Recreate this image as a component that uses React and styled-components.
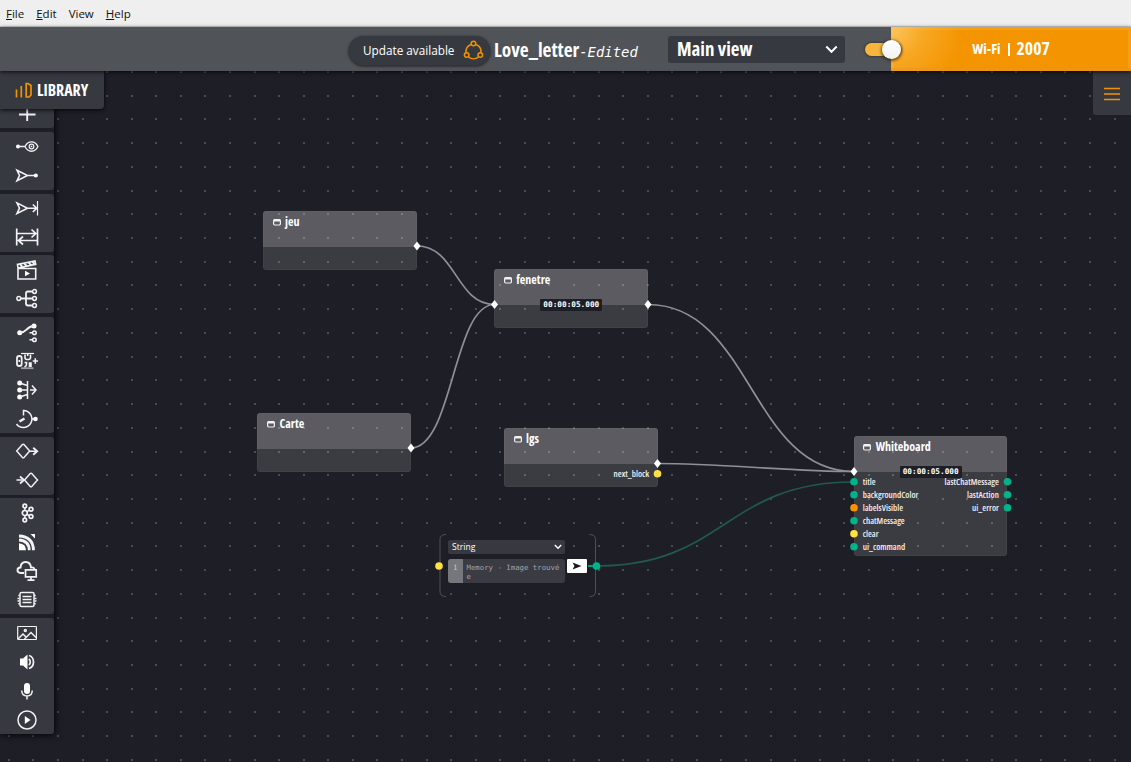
import React from "react";
import styled, { createGlobalStyle } from "styled-components";

const Global = createGlobalStyle`
  * { box-sizing: border-box; }
  html, body { margin: 0; padding: 0; height: 100%; overflow: hidden; }
  body { background: #1e1e27; font-family: "Open Sans", "Noto Sans", sans-serif; color: #fff; }
  #root { height: 100%; }
`;

const Page = styled.div`
  display: flex;
  flex-direction: column;
  width: 1131px;
  height: 762px;
  overflow: hidden;
`;

/* Text in the condensed or monospaced face */
const Label = styled.span`
  display: inline-block;
  white-space: nowrap;
  font-family: ${(p) => (p.$mono ? '"DejaVu Sans Mono", monospace' : '"Open Sans", sans-serif')};
  font-size: ${(p) => p.$size}px;
  font-weight: ${(p) => p.$weight || 400};
  font-style: ${(p) => (p.$italic ? "italic" : "normal")};
  font-stretch: ${(p) => p.$stretch || 100}%;
  line-height: 1;
  color: ${(p) => p.$color || "#fff"};
`;

const MenuBar = styled.nav`
  flex: none;
  display: flex;
  gap: 12px;
  height: 27px;
  padding: 1px 6px 0;
  align-items: center;
  background: #efefef;
  border-bottom: 1px solid #d4d6d6;
`;
const MenuItem = styled.span`
  font: 11.5px/16px "Open Sans", sans-serif;
  color: #111;
  &::first-letter { text-decoration: ${(p) => (p.$plain ? "none" : "underline")}; }
`;

const Header = styled.header`
  position: relative;
  z-index: 5;
  flex: none;
  display: flex;
  align-items: center;
  height: 44px;
  padding-left: 349px;
  background: #505357;
  box-shadow: 0 1px 4px rgba(0, 0, 0, 0.8);
`;
const UpdateButton = styled.div`
  display: flex;
  align-items: center;
  justify-content: space-between;
  width: 141px;
  height: 29px;
  margin-top: 3px;
  padding: 0 6px 0 14px;
  border-radius: 15px;
  background: #373940;
  box-shadow: 0 1px 2px 1px rgba(20, 20, 24, 0.5);
`;
const Title = styled.div`
  display: flex;
  align-items: baseline;
  width: 174px;
  padding: 1px 0 0 4px;
`;
const ViewSelect = styled.div`
  display: flex;
  align-items: center;
  justify-content: space-between;
  width: 177px;
  height: 27px;
  padding: 1px 7px 0 9px;
  margin-right: 20px;
  margin-left: 4px;
  border-radius: 3px;
  background: #373940;
`;
const Toggle = styled.div`
  position: relative;
  z-index: 2;
  display: flex;
  align-items: center;
  justify-content: flex-end;
  width: 36px;
  height: 13px;
  margin-right: -10px;
  border-radius: 7px;
  background: #f7b53d;
  box-shadow: 0 0 2px 1px rgba(50, 45, 40, 0.6);
`;
const Knob = styled.div`
  flex: none;
  width: 19px;
  height: 19px;
  border-radius: 50%;
  background: linear-gradient(#fff, #f1f1f1);
  box-shadow: 0 1px 3px 1px rgba(60, 40, 10, 0.75);
`;
const Wifi = styled.div`
  flex: 1;
  display: flex;
  align-items: center;
  justify-content: center;
  gap: 7px;
  height: 44px;
  background: radial-gradient(circle at 0 0, #fdc65e 0, #f7a824 32px, #f49400 72px);
  box-shadow: inset 0 0 0 3px rgba(255, 190, 80, 0.25), inset 0 -3px 1px rgba(195, 105, 0, 0.3);
`;
const Divider = styled.i`
  width: 2px;
  height: 13px;
  background: #fff;
`;

const Canvas = styled.main`
  position: relative;
  flex: 1;
  display: flex;
  justify-content: space-between;
  align-items: flex-start;
  overflow: hidden;
  background: #1e1e27;
`;
const World = styled.div`
  position: absolute;
  left: 0;
  top: -71px;
  width: 1131px;
  height: 762px;
`;
const Layer = styled.svg`
  position: absolute;
  left: 0;
  top: 0;
  pointer-events: none;
`;

const Side = styled.aside`
  position: relative;
  z-index: 2;
  width: 104px;
`;
const LibraryTab = styled.div`
  position: relative;
  z-index: 2;
  display: flex;
  align-items: center;
  gap: 5px;
  height: 38px;
  padding: 1px 0 0 15px;
  border-radius: 0 0 4px 0;
  background: #373940;
  box-shadow: 0 1px 4px rgba(0, 0, 0, 0.85);
`;
const Tools = styled.div`
  display: flex;
  flex-direction: column;
  gap: 3.7px;
  width: 54px;
  margin-top: -9.7px;
  background: #1e1e27;
  box-shadow: 1px 1px 7px rgba(0, 0, 0, 0.9);
  border-radius: 0 0 3px 0;
`;
const ToolGroup = styled.div`
  border-radius: 0 3px 3px 0;
  background: #373940;
`;
const Tool = styled.div`
  display: flex;
  align-items: center;
  justify-content: center;
  height: 29px;
`;
const Icon = styled.svg`
  display: block;
  flex: none;
  fill: none;
  stroke: ${(p) => p.$stroke || "#f2f2f4"};
  stroke-width: 1.5;
  .f { fill: #fff; stroke: none; }
`;
const MenuTab = styled.div`
  position: relative;
  z-index: 2;
  display: flex;
  align-items: center;
  justify-content: center;
  width: 38px;
  height: 44px;
  padding-top: 1px;
  border-radius: 0 0 0 3px;
  background: #373940;
`;

const Node = styled.section`
  position: absolute;
  left: ${(p) => p.$x}px;
  top: ${(p) => p.$y}px;
  width: 153.7px;
  height: ${(p) => p.$h || 59}px;
  border-radius: 3px;
  background: rgba(255, 255, 255, 0.13);
  box-shadow: inset 0 0 0 1px rgba(255, 255, 255, 0.03);
`;
const NodeHead = styled.div`
  display: flex;
  align-items: center;
  gap: 4.5px;
  height: 35.5px;
  padding: 0 0 13.5px 9.5px;
  border-radius: 3px 3px 0 0;
  background: rgba(255, 255, 255, 0.165);
`;
const Timer = styled.div`
  position: absolute;
  left: 46px;
  top: 29.5px;
  width: 62px;
  height: 12px;
  border-radius: 1px;
  background: #1e1e27;
  display: flex;
  align-items: center;
  justify-content: center;
`;
const Ports = styled.div`
  display: flex;
  justify-content: space-between;
  padding: 4px 8.5px 0 9px;
`;
const PortCol = styled.div`
  display: flex;
  flex-direction: column;
  align-items: ${(p) => (p.$right ? "flex-end" : "flex-start")};
`;
const Port = styled.div`
  display: flex;
  align-items: center;
  height: 13px;
`;
const ConstantBox = styled.div`
  position: absolute;
  left: 448px;
  top: 540px;
  width: 140px;
`;
const TypeSelect = styled.div`
  display: flex;
  align-items: center;
  justify-content: space-between;
  width: 117px;
  height: 14px;
  padding: 0 3px 0 4px;
  border-radius: 2px;
  background: #373940;
`;
const EditorRow = styled.div`
  display: flex;
  align-items: flex-start;
  gap: 2.4px;
  margin-top: 5px;
`;
const Editor = styled.div`
  display: flex;
  width: 117px;
  height: 24px;
  border-radius: 3px;
  overflow: hidden;
  background: #3b3b44;
  font: 7.35px/9px "DejaVu Sans Mono", monospace;
  color: #a2a3a8;
`;
const Gutter = styled.div`
  width: 14.5px;
  padding-top: 3.5px;
  background: #75777c;
  color: #c6c6ca;
  text-align: center;
`;
const Code = styled.div`
  flex: 1;
  padding: 3.5px 0 0 4px;
  white-space: pre;
`;
const Send = styled.div`
  width: 20px;
  height: 14px;
  border-radius: 1px;
  background: #fff;
  display: flex;
  align-items: center;
  justify-content: center;
`;

const ICONS = {
  plus: <path d="M4 12.500h16.500M12.200 4v15" strokeWidth="1.9" />,
  view: <><circle className="f" cx="3" cy="11.500" r="2" /><path d="M3 11.500h7M10 11.500C13 5.200 20 5.200 22.900 11.500C20 17.800 13 17.800 10 11.500Z" strokeWidth="1.3" /><circle cx="16.500" cy="11.500" r="2.300" strokeWidth="1.2" /><circle className="f" cx="16.500" cy="11.500" r="0.800" /></>,
  inlet: <><path d="M2 6.200L12.500 11.500L2 16.800L4.500 11.500Z M12 11.500h8" strokeWidth="1.6" /><circle className="f" cx="20.800" cy="11.500" r="2.100" /></>,
  outlet: <><path d="M2 6.900L12.500 12.200L2 17.500L4.500 12.200Z M12 12.200h10M17.800 8.500L21.800 12.200L17.800 16" strokeWidth="1.6" /><path d="M22.500 5v14.500" strokeWidth="1.2" /></>,
  swap: <path d="M1.700 3.500v17M22.500 3.500v17M2 8.500h19M16.500 4.500L20.800 8.500L16.500 12.500M22 15.500H4M8 11.500L3.500 15.500L8 19.500" strokeWidth="1.700" />,
  film: <><path d="M3 10.500h17.700v10.500H3zM3 10L2.500 6.500L20 3L20.700 6.300Z" strokeWidth="1.6" /><path d="M5 6.200L7.500 9M9 5.400L12 8.300M13.500 4.500L16.500 7.400M17.500 3.800L19.500 6" strokeWidth="1.9" /><path className="f" d="M10 12.800v5.400l5-2.700z" /></>,
  tree: <><circle cx="3.800" cy="11.500" r="1.900" /><circle cx="19.500" cy="4.500" r="1.900" /><circle cx="19.500" cy="11.500" r="1.900" /><circle cx="19.500" cy="18.500" r="1.900" /><path d="M6 11.500h11.500M17.500 4.500h-4.500q-2 0-2 2v10q0 2 2 2h4.500" strokeWidth="1.800" /></>,
  route: <><circle className="f" cx="4.700" cy="12.800" r="2.500" /><circle className="f" cx="19" cy="6" r="2.500" /><path d="M4.700 12.800C12.500 12.500 10.500 6.500 19 6" strokeWidth="1.9" /><circle cx="19.400" cy="12.800" r="1.800" /><circle cx="19.400" cy="19.700" r="1.800" /><path d="M14.500 12.800h3M14.500 19.700h3" /></>,
  counter: <><path d="M6 4.500h13" strokeWidth="1.2" /><path d="M6 19.200h12.500" stroke="#999b9f" strokeWidth="1.8" /><rect x="2" y="7" width="4.700" height="10" rx="2.300" strokeWidth="1.800" /><path d="M4.300 11v2M10 5.500v3q0 2 2 2h1.500q2 0 2-2v-3M12.700 4v3M9.500 13.500h2v2q0 1.500-2 2.500M14.500 18v-4h1.500v4" strokeWidth="1.6" /><path d="M17.700 12h5.300M20.300 9.300v5.400" strokeWidth="1.6" /></>,
  merge: <><circle className="f" cx="4.700" cy="5" r="2.500" /><circle className="f" cx="4.700" cy="12" r="2.500" /><circle className="f" cx="4.700" cy="19" r="2.500" /><path d="M4.500 5l8 2.500M4.500 12h8M4.500 19l8-2.500M12.500 3v18M15 12h6M17 7.500L21 12L17 16.500" /></>,
  timer: <><path d="M8.500 8.500V3.500A8.500 8.500 0 1 1 1.500 17" /><path d="M4.500 14.500L9.500 11.500" strokeWidth="2.400" /><path d="M17 12h4" /><circle className="f" cx="20.500" cy="12" r="2.300" /></>,
  diaOut: <><path d="M1.700 12L7.200 5.700Q8.200 5 9.200 5.700L14.700 12L9.200 18.300Q8.200 19 7.200 18.300Z M15 12.200h6" /><path d="M18.200 8.700l4 3.500l-4 3.500" strokeWidth="1.800" /></>,
  diaIn: <><path d="M9.500 12L15 5.700Q16 5 17 5.700L22.500 12L17 18.300Q16 19 15 18.300Z M1.500 12h6" /><path d="M5 8.500l4 3.500l-4 3.500" strokeWidth="1.800" /></>,
  kafka: <><circle cx="9.800" cy="12" r="2.500" strokeWidth="1.7" /><circle cx="9.800" cy="5" r="1.800" strokeWidth="1.7" /><circle cx="9.800" cy="19" r="1.800" strokeWidth="1.7" /><circle cx="16" cy="8.300" r="1.900" strokeWidth="1.7" /><circle cx="16" cy="15.500" r="1.900" strokeWidth="1.7" /><path d="M9.900 7v2.500M9.900 14.500V17M12 10.700L14.500 9.200M12 13.300L14.500 14.600" /></>,
  feed: <><path d="M4 10Q14 10.500 14.300 20.200M4 6Q18 6.500 18.500 20.200" strokeWidth="2.800" /><path className="f" d="M4 13.200Q11 13.700 11 20.200H4zM15.500 4H20v4.500z" /></>,
  cloud: <><path d="M9 14H5.500C1.500 14 1.500 8.500 5.500 8.500C6 1.500 15 1 16 8.500Q19 8 19.500 10.500" strokeWidth="1.900" /><path d="M10.500 10.800h10.700v7h-10.700zM16 18v3M12.500 21.200h7" strokeWidth="1.700" /></>,
  chip: <><rect x="5" y="4.500" width="14" height="14" rx="1.500" strokeWidth="1.5" /><path d="M7.500 8.500h9M7.500 11.500h9M7.500 14.500h9" strokeWidth="1.500" /><path d="M3.300 7.500h1.500M2.500 10.500h2M2.500 13h2M3.300 15.800h1.500M19 7.500h1.700M19.500 10.500h2M19.500 13h2M19 15.800h1.700" /></>,
  image: <><rect x="2.700" y="5.500" width="18.700" height="13" rx="0.500" strokeWidth="1.2" /><circle cx="10.300" cy="9.500" r="1" /><path d="M3 18L8 13L11 16M9.500 18L16 11.500L21 16.500" /></>,
  sound: <><path className="f" d="M5 8.500h3l4.500-4v15l-4.500-4H5z" /><path d="M14 5.500Q18.500 7 18.500 12Q18.500 17 14 18.500M13.800 9Q15.300 10 15.300 12Q15.300 14 13.800 15" strokeWidth="1.700" /></>,
  mic: <><rect className="f" x="9" y="4" width="6" height="11" rx="3" /><path d="M6.700 11.500Q7 17 12 17Q17 17 17.300 11.500M12 17v3.500" strokeWidth="1.5" /></>,
  play: <><circle cx="12" cy="12" r="9" /><path className="f" d="M9.800 8v8l5.700-4z" /></>,
};
const GROUPS = [["plus"], ["view", "inlet"], ["outlet", "swap"], ["film", "tree"], ["route", "counter", "merge", "timer"], ["diaOut", "diaIn"], ["kafka", "feed", "cloud", "chip"], ["image", "sound", "mic", "play"]];

const XS = Array.from({ length: 47 }, (_, i) => 8.9 + i * 24.57);
const YS = Array.from({ length: 30 }, (_, i) => 72 + i * 23.72);

const WindowIcon = () => (
  <Icon width="8" height="7" viewBox="0 0 8 7">
    <rect x="0.600" y="0.700" width="6.800" height="5.300" rx="1.200" strokeWidth="1.200" />
    <path d="M0.700 1.500h6.600" strokeWidth="2" />
  </Icon>
);

const Chevron = ({ w, sw }) => (
  <Icon width={w} height={w * 0.7} viewBox="0 0 10 7" $stroke="#fff">
    <path d="M1 1.200L5 5.200L9 1.200" strokeWidth={sw} />
  </Icon>
);

const PortList = ({ names, right }) => (
  <PortCol $right={right}>
    {names.map((t) => (
      <Port key={t}><Label $size={8.85} $weight={600} $stretch={75} $color="#f0f0f2">{t}</Label></Port>
    ))}
  </PortCol>
);

const Block = ({ name, x, y, h, time, inputs = [], outputs = [] }) => (
  <Node $x={x} $y={y} $h={h}>
    <NodeHead>
      <WindowIcon />
      <Label $size={12} $weight={700} $stretch={75}>{name}</Label>
    </NodeHead>
    {time && <Timer><Label $mono $size={7.75} $weight={700}>{time}</Label></Timer>}
    <Ports>
      <PortList names={inputs} />
      <PortList names={outputs} right />
    </Ports>
  </Node>
);

const WIRES = [
  "M417 246C456 246 456 304.500 494.500 304.500",
  "M411 448C453 448 453 304.500 494.500 304.500",
  "M648 304.500C751 304.500 751 471.500 854 471.500",
  "M657.500 463.500C720 463.500 792 471.500 854 471.500",
];
const DIAMONDS = [[417, 246], [494.5, 304.5], [648, 304.5], [411, 448], [657.5, 463.5], [854, 471.5]];
const GREEN = "#00b38a";
const YELLOW = "#ffe042";
const DOTS = [
  [854, 481.7, GREEN], [854, 494.7, GREEN], [854, 507.7, "#fb9300"], [854, 520.7, GREEN], [854, 533.7, YELLOW], [854, 546.7, GREEN],
  [1007.5, 481.7, GREEN], [1007.5, 494.7, GREEN], [1007.5, 507.7, GREEN],
  [657.5, 473.7, YELLOW], [439, 566, YELLOW], [596.5, 566, GREEN],
];

export default function App() {
  return (
    <Page>
      <Global />
      <MenuBar>
        <MenuItem>File</MenuItem>
        <MenuItem>Edit</MenuItem>
        <MenuItem $plain>View</MenuItem>
        <MenuItem>Help</MenuItem>
      </MenuBar>
      <Header>
        <UpdateButton>
          <Label $size={11.75}>Update available</Label>
          <Icon width="21" height="21" viewBox="0 0 21 21" $stroke="#f39200">
            <circle cx="10.500" cy="3.500" r="2.300" />
            <circle cx="3.700" cy="15" r="2.300" />
            <circle cx="17.300" cy="15" r="2.300" />
            <path d="M8 4.500A8 8 0 0 0 3 12.700M13 4.500A8 8 0 0 1 18 12.700M5.500 17A8 8 0 0 0 15.500 17" />
          </Icon>
        </UpdateButton>
        <Title>
          <Label $size={19.35} $weight={700} $stretch={75}>Love_letter</Label>
          <Label $mono $italic $size={13.9}>-Edited</Label>
        </Title>
        <ViewSelect>
          <Label $size={18.9} $weight={700} $stretch={75}>Main view</Label>
          <Chevron w={13} sw={1.5} />
        </ViewSelect>
        <Toggle><Knob /></Toggle>
        <Wifi>
          <Label $size={14.3} $weight={700} $stretch={75}>Wi-Fi</Label>
          <Divider />
          <Label $size={17.7} $weight={700} $stretch={75}>2007</Label>
        </Wifi>
      </Header>
      <Canvas>
        <World>
          <Layer width="1131" height="762">
            {YS.map((y) => XS.map((x) => (
              <rect key={`${x}-${y}`} x={Math.round(x - 1)} y={Math.round(y - 1)} width="2" height="2" fill="#4b4b53" />
            )))}
          </Layer>
          <Block name="jeu" x={263} y={211} />
          <Block name="fenetre" x={494.3} y={269.4} time="00:00:05.000" />
          <Block name="Carte" x={257.4} y={413} />
          <Block name="lgs" x={504} y={428.4} outputs={["next_block"]} />
          <Block name="Whiteboard" x={853.7} y={436.2} h={120} time="00:00:05.000"
            inputs={["title", "backgroundColor", "labelsVisible", "chatMessage", "clear", "ui_command"]}
            outputs={["lastChatMessage", "lastAction", "ui_error"]} />
          <ConstantBox>
            <TypeSelect>
              <Label $size={8.6} $stretch={90}>String</Label>
              <Chevron w={8} sw={1.8} />
            </TypeSelect>
            <EditorRow>
              <Editor>
                <Gutter>1</Gutter>
                <Code>{"Memory - Image trouvé\ne"}</Code>
              </Editor>
              <Send>
                <svg width="10" height="8" viewBox="0 0 10 8"><path d="M0.500 0.500L9.500 4L0.500 7.500L2.500 4Z" fill="#16181d" /></svg>
              </Send>
            </EditorRow>
          </ConstantBox>
          <Layer width="1131" height="762">
            <path d="M446 534.500q-6 0-6 5v52q0 5 6 5M589.500 534.500q6 0 6 5v52q0 5-6 5" fill="none" stroke="#505158" />
            {WIRES.map((d) => <path key={d} d={d} fill="none" stroke="#8f8f94" strokeWidth="1.700" />)}
            <path d="M596.500 566C725 566 725 482 854 482" fill="none" stroke="#21594f" strokeWidth="1.700" />
            <path d="M588 566h9" stroke={GREEN} strokeWidth="1.700" />
            {DOTS.map(([x, y, c]) => <circle key={`${x}-${y}`} cx={x} cy={y} r="3.800" fill={c} />)}
            {DIAMONDS.map(([x, y]) => <path key={`${x}-${y}`} d={`M${x} ${y - 4.5}l3.500 4.500l-3.500 4.500l-3.500-4.500z`} fill="#fff" />)}
          </Layer>
        </World>
        <Side>
          <LibraryTab>
            <Icon width="17" height="17" viewBox="0 0 17 17" $stroke="#f39200">
              <path d="M1.500 7.500v8M6.300 4v11.500M11.200 1.500h1.800l3 2v9.500l-2 2h-2.800z" strokeWidth="1.700" />
            </Icon>
            <Label $size={15.9} $weight={700} $stretch={75}>LIBRARY</Label>
          </LibraryTab>
          <Tools>
            {GROUPS.map((g) => (
              <ToolGroup key={g[0]}>
                {g.map((n) => <Tool key={n}><Icon width="24" height="24" viewBox="0 0 24 24">{ICONS[n]}</Icon></Tool>)}
              </ToolGroup>
            ))}
          </Tools>
        </Side>
        <MenuTab>
          <Icon width="16" height="14" viewBox="0 0 16 14" $stroke="#f39200">
            <path d="M0 1.500h16M0 7h16M0 12.500h16" strokeWidth="1.700" />
          </Icon>
        </MenuTab>
      </Canvas>
    </Page>
  );
}
